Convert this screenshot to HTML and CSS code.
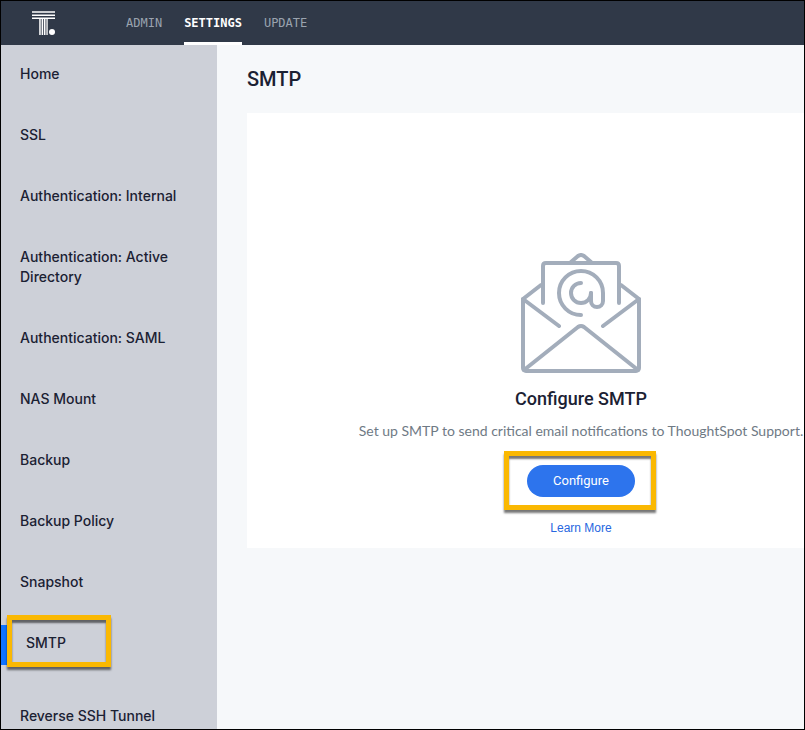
FILE: index.html
```html
<!DOCTYPE html>
<html lang="en">
<head>
<meta charset="utf-8">
<meta name="viewport" content="width=device-width, initial-scale=1">
<title>SMTP settings</title>
<link rel="stylesheet" href="styles.css">
</head>
<body>
<header class="topbar">
  <a class="logo" href="#" aria-label="ThoughtSpot">
    <svg width="24" height="24" viewBox="0 0 24 24" fill="#fff" aria-hidden="true">
      <path d="M0 .3h23v1.5H0zM0 3.4h23v1.5H0zM0 6.4h23V8H0z"/>
      <path d="M7.2 8h1.5v16H7.2zM9.6 8h1.6v16H9.6zM12 8h1.5v16H12zM14.4 8h1.3v16h-1.3z"/>
      <circle cx="20" cy="21" r="3"/>
    </svg>
  </a>
  <nav class="tabs" aria-label="Main">
    <a class="tab" href="#">ADMIN</a>
    <a class="tab tab-active" href="#" aria-current="page">SETTINGS</a>
    <a class="tab" href="#">UPDATE</a>
  </nav>
</header>
<div class="layout">
  <nav class="sidebar" aria-label="Settings">
    <ul class="menu">
      <li><a href="#">Home</a></li>
      <li><a href="#">SSL</a></li>
      <li><a href="#">Authentication: Internal</a></li>
      <li><a href="#">Authentication: Active Directory</a></li>
      <li><a href="#">Authentication: SAML</a></li>
      <li><a href="#">NAS Mount</a></li>
      <li><a href="#">Backup</a></li>
      <li><a href="#">Backup Policy</a></li>
      <li><a href="#">Snapshot</a></li>
      <li class="menu-active"><a href="#" aria-current="page">SMTP</a></li>
      <li><a href="#">Reverse SSH Tunnel</a></li>
    </ul>
  </nav>
  <main class="content">
    <h1 class="page-title">SMTP</h1>
    <section class="card">
      <svg class="envelope" width="120" height="120" viewBox="21 13 120 120" fill="none" stroke="#a3adbb" stroke-width="4" stroke-linecap="round" stroke-linejoin="round" aria-hidden="true">
        <path d="M41 45 23 59v69a3 3 0 0 0 3 3h110a3 3 0 0 0 3-3V59l-18-14"/>
        <path d="m23 59 36 27M139 59l-36 27"/>
        <path d="m24 130 54-43q3-2 6 0l54 43"/>
        <path d="M43 63V26q0-3 3-3h70q3 0 3 3v37"/>
        <path d="m71 22 7-6q3-2 6 0l7 6"/>
        <path d="M81 75a22 22 0 1 1 22-22v8a6 6 0 0 1-12 0v-8"/>
        <path d="M81 43a10 10 0 1 0 10 10"/>
      </svg>
      <h2 class="card-title">Configure SMTP</h2>
      <p class="card-text">Set up SMTP to send critical email notifications to ThoughtSpot Support.</p>
      <div class="action"><button class="button" type="button">Configure</button></div>
      <a class="more" href="#">Learn More</a>
    </section>
  </main>
</div>
</body>
</html>
```
FILE: styles.css
```css
*,
*::before,
*::after {
  box-sizing: border-box;
}

body {
  margin: 0;
  height: 100vh;
  display: flex;
  flex-direction: column;
  overflow: hidden;
  border: 1px solid #000;
  background: #f6f8fa;
  color: #1b2133;
  font-family: Roboto, "Liberation Sans", sans-serif;
  font-size: 14px;
  line-height: 20px;
}

a {
  color: inherit;
  text-decoration: none;
}

.topbar {
  display: flex;
  flex: none;
  height: 44px;
  background: #303948;
}

.logo {
  display: flex;
  width: 125px;
  padding: 10px 0 0 31px;
}

.tabs {
  display: flex;
  gap: 22px;
  font-family: "DejaVu Sans Mono", monospace;
  font-size: 12px;
}

.tab {
  padding-top: 12px;
  color: #9aa3af;
}

.tab-active {
  border-bottom: 3px solid #fff;
  color: #fff;
  font-weight: 700;
}

.layout {
  display: flex;
  flex: 1;
  min-height: 0;
}

.sidebar {
  flex: none;
  width: 216px;
  overflow: hidden;
  background: #cdd0d8;
}

.menu {
  display: flex;
  flex-direction: column;
  gap: 41px;
  margin: 0;
  padding: 19px 19px 0;
  list-style: none;
  font-family: Inter, "Liberation Sans", sans-serif;
  font-weight: 500;
}

.menu-active {
  position: relative;
  margin-bottom: 12px;
  padding-left: 6px;
}

.menu-active::before {
  content: "";
  position: absolute;
  left: -19px;
  top: -8px;
  width: 6px;
  height: 40px;
  background: #0f73ff;
}

.menu-active::after,
.action::after {
  content: "";
  position: absolute;
  border: 5px solid #fab802;
  box-shadow: 0 3px 2px #0008, inset 0 3px 2px #0008;
  pointer-events: none;
}

.menu-active::after {
  left: -13px;
  top: -18px;
  width: 104px;
  height: 52px;
}

.content {
  flex: 1;
  min-width: 0;
  padding: 20px 0 0 30px;
  overflow: hidden;
}

.page-title,
.card-title {
  font-weight: 500;
}

.page-title {
  margin: 0 0 20px;
  font-size: 20px;
  line-height: 28px;
}

.card {
  display: flex;
  flex-direction: column;
  align-items: center;
  width: 100%;
  min-width: 668px;
  padding: 140px 0 10px;
  background: #fff;
}

.card-title {
  margin: 14px 0 10px;
  font-size: 18px;
  line-height: 24px;
}

.card-text {
  margin: 0 0 24px;
  color: #6f7a85;
  font-family: Lato, "Liberation Sans", sans-serif;
}

.action {
  position: relative;
  margin-bottom: 21px;
}

.action::after {
  inset: -14px -21px -13px -23px;
}

.button {
  display: block;
  padding: 6px 26px;
  border: 0;
  border-radius: 16px;
  background: #2d74ed;
  color: #fff;
  font: inherit;
  font-size: 13px;
  line-height: 20px;
}

.more {
  color: #2767e0;
  font-family: "Liberation Sans", sans-serif;
  font-size: 12px;
}
```
